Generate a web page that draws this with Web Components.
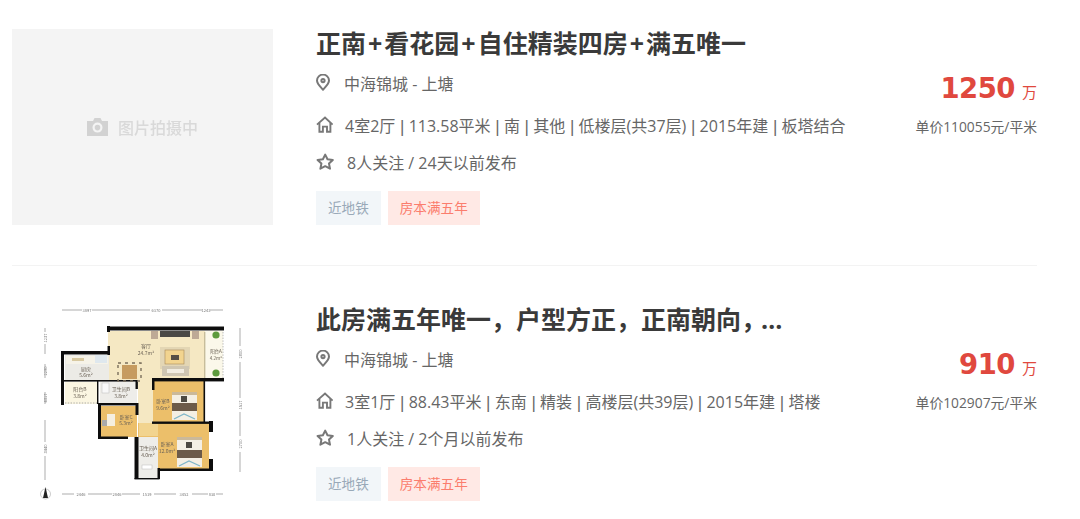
<!DOCTYPE html>
<html lang="zh">
<head>
<meta charset="utf-8">
<title>房源列表</title>
<style>
  html, body { margin: 0; background: #fff; }
  body { font-family: "Open Sans", "Noto Sans CJK SC", sans-serif; overflow: hidden; }
</style>
</head>
<body>
<house-list>
  <house-card title="正南+看花园+自住精装四房+满五唯一" price="1250" unit="单价110055元/平米">
    <photo-placeholder slot="media"></photo-placeholder>
    <info-row icon="pin">中海锦城 - 上塘</info-row>
    <info-row icon="home">4室2厅 <span class="sep">|</span> 113.58平米 <span class="sep">|</span> 南 <span class="sep">|</span> 其他 <span class="sep">|</span> 低楼层(共37层) <span class="sep">|</span> 2015年建 <span class="sep">|</span> 板塔结合</info-row>
    <info-row icon="star">8人关注 / 24天以前发布</info-row>
    <tag-chip slot="tags">近地铁</tag-chip>
    <tag-chip slot="tags" kind="red">房本满五年</tag-chip>
  </house-card>
  <house-card title="此房满五年唯一，户型方正，正南朝向，…" price="910" unit="单价102907元/平米">
    <floor-plan slot="media"></floor-plan>
    <info-row icon="pin">中海锦城 - 上塘</info-row>
    <info-row icon="home">3室1厅 <span class="sep">|</span> 88.43平米 <span class="sep">|</span> 东南 <span class="sep">|</span> 精装 <span class="sep">|</span> 高楼层(共39层) <span class="sep">|</span> 2015年建 <span class="sep">|</span> 塔楼</info-row>
    <info-row icon="star">1人关注 / 2个月以前发布</info-row>
    <tag-chip slot="tags">近地铁</tag-chip>
    <tag-chip slot="tags" kind="red">房本满五年</tag-chip>
  </house-card>
</house-list>

<script>
const ICONS = {
  pin: `<svg width="14" height="17" viewBox="0 0 14 17" fill="none" stroke="#787878" stroke-width="2">
      <path d="M7 15.7C4.6 13 1 10 1 6.6A6 6 0 0 1 13 6.6C13 10 9.4 13 7 15.7Z"/>
      <circle cx="7" cy="6.6" r="1.6"/></svg>`,
  home: `<svg width="17" height="17" viewBox="0 0 17 17" fill="none" stroke="#787878" stroke-width="1.9">
      <path d="M1 8.6L9 1.5L16.6 8.6"/>
      <path d="M3.4 7V15.7H6.9V10.6H11V15.7H14.4V7"/></svg>`,
  star: `<svg width="18" height="17" viewBox="0 0 18 17" fill="none" stroke="#787878" stroke-width="2" stroke-linejoin="round">
      <path d="M9.2 1.6L11.5 6.3L16.8 7L13 10.6L14 15.7L9.2 13.2L4.4 15.7L5.4 10.6L1.6 7L6.9 6.3Z"/></svg>`
};

class HouseList extends HTMLElement {
  constructor() {
    super();
    this.attachShadow({ mode: 'open' });
  }

  connectedCallback() {
    this.shadowRoot.innerHTML = `
      <style>
        :host {
          display: block;
          width: 1025px;
          margin-left: 12px;
          padding-top: 29px;
        }
        ::slotted(house-card:not(:last-child)) {
          border-bottom: 1px solid #f3f3f3;
          padding-bottom: 40px;
          margin-bottom: 39px;
        }
      </style>
      <slot></slot>
    `;
  }
}

class HouseCard extends HTMLElement {
  constructor() {
    super();
    this.attachShadow({ mode: 'open' });
  }

  connectedCallback() {
    const title = this.getAttribute('title')
      .replace(/\+/g, '<span class="plus">+</span>')
      .replace('，…', '<span class="cut">，</span>…');
    const price = this.getAttribute('price');
    const unit = this.getAttribute('unit');

    this.shadowRoot.innerHTML = `
      <style>
        :host {
          display: grid;
          grid-template-columns: 261px 1fr;
          column-gap: 43px;
        }
        .media {
          height: 196px;
        }
        .body {
          display: flex;
          flex-direction: column;
          min-width: 0;
        }
        h2 {
          margin: 0 0 5px;
          height: 29px;
          line-height: 29px;
          font-size: 25px;
          font-weight: 700;
          color: #3a3a3a;
          white-space: nowrap;
        }
        .plus { margin: 0 2px; }
        .cut { letter-spacing: -5px; }
        .mid {
          display: flex;
          justify-content: space-between;
        }
        .rows {
          display: flex;
          flex-direction: column;
        }
        .price {
          display: flex;
          flex-direction: column;
          align-items: flex-end;
          padding-top: 5px;
        }
        .amount {
          height: 40px;
          line-height: 40px;
          color: #e0483e;
          font-size: 15px;
          white-space: nowrap;
        }
        .amount b {
          font-family: "DejaVu Sans", sans-serif;
          font-size: 27.5px;
          font-weight: 700;
          letter-spacing: -0.5px;
          margin-right: 7px;
        }
        .unit {
          margin-top: 9px;
          font-size: 13.8px;
          line-height: 20px;
          color: #666;
        }
        .tags {
          display: flex;
          gap: 7px;
          margin-top: 11px;
        }
      </style>
      <div class="media"><slot name="media"></slot></div>
      <div class="body">
        <h2>${title}</h2>
        <div class="mid">
          <div class="rows"><slot></slot></div>
          <div class="price">
            <div class="amount"><b>${price}</b>万</div>
            <div class="unit">${unit}</div>
          </div>
        </div>
        <div class="tags"><slot name="tags"></slot></div>
      </div>
    `;
  }
}

class InfoRow extends HTMLElement {
  constructor() {
    super();
    this.attachShadow({ mode: 'open' });
  }

  connectedCallback() {
    const icon = this.getAttribute('icon');

    this.shadowRoot.innerHTML = `
      <style>
        :host {
          display: flex;
          align-items: center;
          height: 39px;
          font-size: 16px;
          color: #666;
          white-space: pre;
        }
        :host([icon="home"]) { margin: 3px 0 -2px; }
        :host([icon="star"]) { margin-bottom: -1px; }
        .ico {
          display: flex;
          align-items: center;
          width: 16px;
          margin-right: 13px;
          flex-shrink: 0;
        }
        :host([icon="pin"]) .ico { margin-right: 12px; }
        :host([icon="star"]) .ico { margin-right: 15px; }
        svg { display: block; flex-shrink: 0; }
        ::slotted(.sep) {
          font-family: "DejaVu Sans", sans-serif;
          letter-spacing: -0.4px;
        }
      </style>
      <span class="ico">${ICONS[icon]}</span>
      <span><slot></slot></span>
    `;
  }
}

class TagChip extends HTMLElement {
  constructor() {
    super();
    this.attachShadow({ mode: 'open' });
  }

  connectedCallback() {
    const red = this.getAttribute('kind') === 'red';

    this.shadowRoot.innerHTML = `
      <style>
        :host {
          display: block;
          height: 34px;
          line-height: 34px;
          padding: 0 12px;
          font-size: 13.6px;
          background: ${red ? '#ffe9e5' : '#f2f6f9'};
          color: ${red ? '#fb7d6d' : '#99a9b8'};
        }
      </style>
      <slot></slot>
    `;
  }
}

class PhotoPlaceholder extends HTMLElement {
  constructor() {
    super();
    this.attachShadow({ mode: 'open' });
  }

  connectedCallback() {
    this.shadowRoot.innerHTML = `
      <style>
        :host {
          display: flex;
          align-items: center;
          justify-content: center;
          gap: 10px;
          height: 196px;
          background: #f4f4f4;
          color: #d9d9d9;
          font-size: 16px;
          font-weight: 500;
        }
        svg { display: block; filter: blur(0.3px); }
        span { filter: blur(0.3px); }
      </style>
      <svg width="21" height="18" viewBox="0 0 21 18">
        <path fill="#d2d2d2" fill-rule="evenodd" d="M0 3H6L7.5 0H13.5L15 3H21V18H0ZM10.5 4.6A5 5 0 1 0 10.5 14.6A5 5 0 1 0 10.5 4.6ZM10.5 6.8A2.8 2.8 0 1 1 10.5 12.4A2.8 2.8 0 1 1 10.5 6.8Z"/>
      </svg>
      <span>图片拍摄中</span>
    `;
  }
}

class FloorPlan extends HTMLElement {
  constructor() {
    super();
    this.attachShadow({ mode: 'open' });
  }

  connectedCallback() {
    // coordinates in the viewBox are page pixels of the second card
    this.shadowRoot.innerHTML = `
      <style>
        :host { display: block; height: 196px; }
        svg { display: block; }
        text { font-family: "Noto Sans CJK SC", sans-serif; font-size: 5px; fill: #6b6256; text-anchor: middle; }
        .dim { font-size: 4px; fill: #777; }
      </style>
      <svg width="261" height="196" viewBox="12 305 261 196">
        <defs><filter id="soft" x="-5%" y="-5%" width="110%" height="110%"><feGaussianBlur stdDeviation="0.6"/></filter></defs>
        <g filter="url(#soft)">
          <!-- dimension lines -->
          <g stroke="#777" stroke-width="0.6" fill="none">
            <path d="M62 310H82M92 310H150M162 310H202M210 310H223"/>
            <path d="M62 494H74M88 494H112M122 494H140M154 494H176M192 494H208M216 494H223"/>
            <path d="M45 328V332M45 344V354M45 364V378M45 392V404M45 420V442M45 456V480"/>
            <path d="M240 328V346M240 362V398M240 412V436M240 452V472"/>
          </g>
          <text class="dim" x="87" y="311.5">3897</text>
          <text class="dim" x="156" y="311.5">6370</text>
          <text class="dim" x="206" y="311.5">1243</text>
          <text class="dim" x="81" y="495.5">2446</text>
          <text class="dim" x="117" y="495.5">2846</text>
          <text class="dim" x="147" y="495.5">1519</text>
          <text class="dim" x="184" y="495.5">3452</text>
          <text class="dim" x="212" y="495.5">830</text>
          <text class="dim" transform="translate(46.5 338) rotate(-90)">1237</text>
          <text class="dim" transform="translate(46.5 371) rotate(-90)">2290</text>
          <text class="dim" transform="translate(46.5 398) rotate(-90)">4317</text>
          <text class="dim" transform="translate(46.5 449) rotate(-90)">3440</text>
          <text class="dim" transform="translate(241.5 354) rotate(-90)">2800</text>
          <text class="dim" transform="translate(241.5 405) rotate(-90)">1517</text>
          <text class="dim" transform="translate(241.5 444) rotate(-90)">2700</text>

          <!-- floors -->
          <path fill="#f5e8c3" d="M108 331H206V380H153V423H138V381H108Z"/>
          <rect x="205" y="331" width="18" height="47" fill="#fbf8ea"/>
          <rect x="65" y="355" width="44" height="25" fill="#ecebe6"/>
          <rect x="65" y="382" width="33" height="22" fill="#fbf6e2"/>
          <rect x="100" y="382" width="37" height="22" fill="#eeede9"/>
          <rect x="153" y="381" width="51" height="42" fill="#ecbf6b"/>
          <rect x="101" y="406" width="36" height="31" fill="#ecbf6b"/>
          <rect x="138" y="423" width="71" height="46" fill="#ecbf6b"/>
          <rect x="139" y="423" width="19" height="13" fill="#f2d48f"/>
          <rect x="138" y="437" width="20" height="41" fill="#eeede9"/>

          <!-- walls -->
          <g fill="#111">
            <rect x="107" y="326.5" width="117" height="4"/>
            <rect x="107" y="326" width="3" height="6"/>
            <rect x="107.5" y="346" width="2.5" height="9"/>
            <rect x="61" y="351" width="49" height="3.5"/>
            <rect x="61" y="351" width="3" height="54"/>
            <rect x="64" y="380" width="74" height="1.6"/>
            <rect x="97" y="380" width="1.4" height="24"/>
            <rect x="135.5" y="380" width="2.4" height="9"/>
            <rect x="135.5" y="403" width="3" height="12"/>
            <rect x="98" y="403" width="40" height="2.4"/>
            <rect x="98" y="403" width="3" height="36"/>
            <rect x="98" y="436.5" width="30" height="2.5"/>
            <rect x="152" y="378" width="72" height="3.4"/>
            <rect x="152" y="378" width="2.5" height="12"/>
            <rect x="203.5" y="378" width="1.6" height="44"/>
            <rect x="152" y="421.5" width="60" height="2.4"/>
            <rect x="209" y="421" width="4" height="11"/>
            <rect x="209" y="459" width="4" height="12"/>
            <rect x="158" y="468.5" width="55" height="2.5"/>
            <rect x="134.5" y="437" width="4" height="42"/>
            <rect x="157.5" y="468" width="2.5" height="11"/>
            <rect x="134.5" y="478" width="25" height="1.4"/>
          </g>
          <rect x="204" y="332" width="1.4" height="46" fill="#c7bd9b"/>
          <path d="M223 332V378" stroke="#aaa" stroke-width="0.8" stroke-dasharray="1.4 1.4"/>
          <path d="M65 403H97" stroke="#999" stroke-width="0.8" stroke-dasharray="1.4 1.4"/>

          <!-- kitchen counter -->
          <rect x="66" y="356" width="42" height="8" fill="#f6f3e8"/>
          <rect x="95" y="355" width="12" height="8" fill="#dfe8ee"/>
          <rect x="72" y="358" width="12" height="3" fill="#d8c9a0"/>

          <!-- living room furniture -->
          <rect x="160" y="331" width="30" height="6" fill="#4b4a45"/>
          <rect x="151" y="331" width="7" height="8" fill="#bda995"/>
          <rect x="192" y="331" width="7" height="8" fill="#bda995"/>
          <rect x="160" y="347" width="30" height="22" fill="#e3d6b4"/>
          <rect x="165" y="350" width="19" height="14" fill="#f2d48f" stroke="#a8895a" stroke-width="0.6"/>
          <rect x="171" y="355" width="8" height="5" fill="#574f44"/>
          <rect x="162" y="366" width="27" height="10" fill="#cfc6b2"/>
          <rect x="167" y="369" width="17" height="4" fill="#f1ece0"/>
          <rect x="122" y="365" width="15" height="14" fill="#c69b5e"/>
          <rect x="118" y="363" width="23" height="18" fill="none" stroke="#7b6f5c" stroke-width="1.4" stroke-dasharray="3 4"/>

          <!-- plants -->
          <circle cx="216" cy="335" r="3.6" fill="#5d9b3c"/>
          <circle cx="216" cy="373" r="3.6" fill="#5d9b3c"/>

          <!-- beds -->
          <rect x="172" y="392" width="25" height="28" fill="#f4efe4"/>
          <rect x="172" y="392" width="25" height="3" fill="#cbb99a"/>
          <rect x="172" y="403" width="25" height="8" fill="#6c5a48"/>
          <rect x="181" y="396" width="6" height="6" fill="#4e4a42"/>
          <path d="M174 419L184 414L195 419" stroke="#7fb6c8" stroke-width="1.2" fill="none"/>
          <rect x="177" y="437" width="25" height="30" fill="#f4efe4"/>
          <rect x="177" y="437" width="25" height="3" fill="#cbb99a"/>
          <rect x="177" y="450" width="25" height="8" fill="#6c5a48"/>
          <rect x="186" y="442" width="6" height="6" fill="#4e4a42"/>
          <path d="M179 466L189 461L200 466" stroke="#7fb6c8" stroke-width="1.2" fill="none"/>

          <!-- small fixtures -->
          <rect x="102" y="383" width="7" height="10" fill="#f8f8f8" stroke="#bbb" stroke-width="0.5"/>
          <rect x="107" y="414" width="8" height="12" fill="#f5efe0"/>
          <rect x="102" y="420" width="5" height="6" fill="#aaa"/>
          <rect x="142" y="465" width="10" height="4" fill="#fff" stroke="#bbb" stroke-width="0.5"/>

          <!-- room labels -->
          <text x="146" y="348">客厅</text><text x="146" y="355">24.7m²</text>
          <text x="86" y="371">厨房</text><text x="86" y="377">5.6m²</text>
          <text x="80" y="391">阳台B</text><text x="80" y="398">3.8m²</text>
          <text x="121" y="391">卫生间B</text><text x="121" y="398">3.8m²</text>
          <text x="216" y="353" style="font-size:4.5px">阳台A</text><text x="216" y="360" style="font-size:4.5px">4.2m²</text>
          <text x="163" y="403">卧室B</text><text x="163" y="410">9.6m²</text>
          <text x="126" y="419">卧室C</text><text x="126" y="425">5.3m²</text>
          <text x="167" y="446">卧室A</text><text x="167" y="453">12.0m²</text>
          <text x="148" y="450">卫生间A</text><text x="148" y="457">4.0m²</text>

          <!-- compass -->
          <circle cx="45.5" cy="494" r="5" fill="none" stroke="#aaa" stroke-width="0.6"/>
          <path d="M45.5 487L48 498H43Z" fill="#222"/>
        </g>
      </svg>
    `;
  }
}

customElements.define('house-list', HouseList);
customElements.define('house-card', HouseCard);
customElements.define('info-row', InfoRow);
customElements.define('tag-chip', TagChip);
customElements.define('photo-placeholder', PhotoPlaceholder);
customElements.define('floor-plan', FloorPlan);
</script>
</body>
</html>
